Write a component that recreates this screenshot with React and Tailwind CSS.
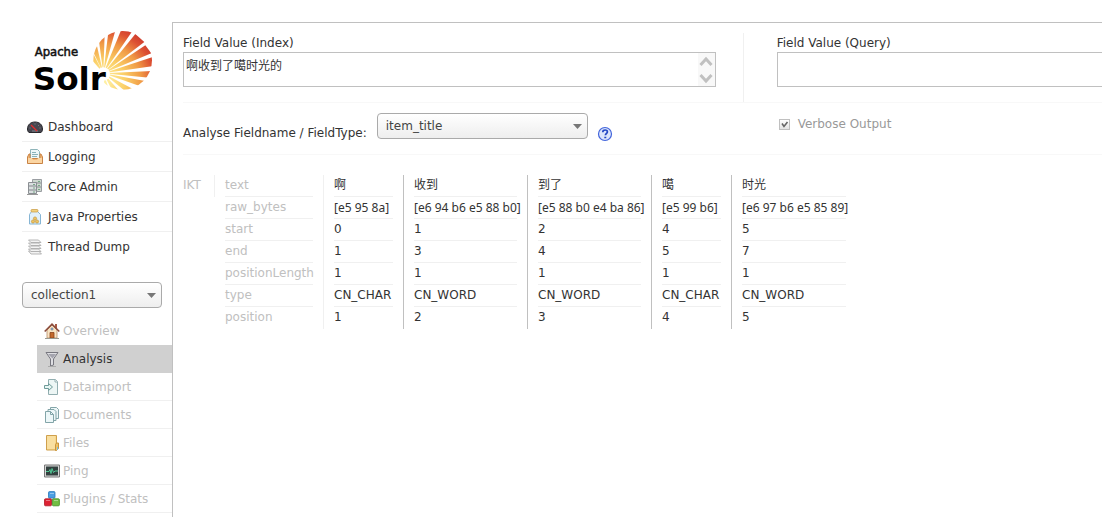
import React from "react";

const RAYS = [
  "219,100 219,124",
  "214,84 228,66",
  "236,56 254,42",
  "265,36 287,28",
  "305,26 338,32",
  "346,42 373,66",
  "376,76 394,100",
  "402,110 402,138",
  "402,153 396,174",
  "392,186 374,203",
  "352,214 326,222",
  "306,222 282,222",
  "272,222 254,206",
];

function Logo() {
  return (
    <svg viewBox="0 0 390 210" className="h-[70px] w-[130px]" role="img" aria-label="Apache Solr">
      <defs>
        <radialGradient id="sun" gradientUnits="userSpaceOnUse" cx="250" cy="185" r="185">
          <stop offset="0" stopColor="#fff3a8" />
          <stop offset=".35" stopColor="#fbd068" />
          <stop offset=".62" stopColor="#f09a45" />
          <stop offset=".82" stopColor="#dd5233" />
          <stop offset="1" stopColor="#c8302b" />
        </radialGradient>
        <clipPath id="disc">
          <circle cx="308" cy="121" r="88" />
        </clipPath>
      </defs>
      <g transform="translate(-6 -24)">
        <g clipPath="url(#disc)" fill="url(#sun)">
          {RAYS.map((r) => (
            <polygon key={r} points={"250,160 " + r} />
          ))}
        </g>
        <circle cx="250" cy="162" r="20" fill="#fff" />
        <text x="44" y="109" fontSize="35" fontFamily="'DejaVu Sans', sans-serif" fill="#111" stroke="#111" strokeWidth="1.500">
          Apache
        </text>
        <text x="38" y="209" fontSize="98" fontWeight="700" fontFamily="'DejaVu Sans', sans-serif" stroke="#fff" strokeWidth="9" paintOrder="stroke" fill="#000">
          Solr
        </text>
      </g>
    </svg>
  );
}

function Icon({ children }) {
  return (
    <svg viewBox="0 0 16 16" className="size-4 shrink-0" aria-hidden="true">
      {children}
    </svg>
  );
}

const icons = {
  dashboard: (
    <Icon>
      <path d="M.5 10C.5 5.800 3.500 3 8 3s7.500 2.800 7.500 7c0 1.800-.6 2.800-1.500 3.500H2C1.100 12.800.5 11.800.5 10z" fill="#474750" stroke="#29292e" />
      <path d="M2.500 9h1M4 6l.7.7M8 4.500v1M12 6l-.7.7M13.500 9h-1M5 12h6" stroke="#85858e" />
      <path d="M4 6l6 6" stroke="#e22c2c" strokeWidth="1.300" />
    </Icon>
  ),
  logging: (
    <Icon>
      <path d="M3.500.5h7l2 2V10h-9z" fill="#eef7f8" stroke="#8fb5ba" />
      <path d="M5 3.500h4M5 5.500h6M5 7.500h5" stroke="#8ab3ba" />
      <path d="M.5 8l1.500-3h1v4.500h10V5h1l1.500 3v6.500H.5z" fill="#f2b877" stroke="#c98345" />
      <path d="M1 9h4l1 2h4l1-2h4v5H1z" fill="#fbd5a2" />
    </Icon>
  ),
  core: (
    <Icon>
      <path d="M5.500.5h9v12h-9z" fill="#cdd8cf" stroke="#9a9ea2" />
      <path d="M6 4h8M6 8h8" stroke="#8b9094" />
      <path d="M1.500 3.500h8v11h-8z" fill="#dadfe0" stroke="#8b8f93" />
      <path d="M2 7h7M2 11h7" stroke="#83878b" />
      <path d="M6 5.500h2M6 9h2M6 13h2M11 2.500h2M11 6.500h2M11 10.500h2" stroke="#77a886" />
      <path d="M0 15.500h11" stroke="#999" />
    </Icon>
  ),
  java: (
    <Icon>
      <path d="M4.500 2.500h6l3 3v9.500h-11V5.500z" fill="#e2f1fa" stroke="#86b5d4" />
      <rect x="4" y=".5" width="7" height="2.500" rx="1" fill="#f3d17c" stroke="#c79a40" strokeWidth=".7" />
      <g fill="#efc45e" stroke="#c18e2d" strokeWidth=".6">
        <circle cx="8" cy="9.500" r="1.600" />
        <circle cx="6" cy="12.500" r="1.600" />
        <circle cx="10" cy="12.500" r="1.600" />
      </g>
    </Icon>
  ),
  thread: (
    <Icon>
      <g fill="#f3f3f3" stroke="#a5a5a5" strokeWidth=".8">
        <path d="M1.500 12h10l3 3H4z" />
        <path d="M4 12.500L1.500 10h10L14 12.500z" />
        <path d="M4 9.500L1.500 7h10L14 9.500z" />
        <path d="M4 6.500L1.500 4h10L14 6.500z" />
        <path d="M4 3.500L1.500 1h10L14 3.500z" />
      </g>
    </Icon>
  ),
  overview: (
    <Icon>
      <path d="M11 1h2v5h-2z" fill="#a85a45" />
      <path d="M3 7l5-5 5 5v8H3z" fill="#f8e4c4" stroke="#b88d69" strokeWidth=".8" />
      <path d="M.7 8.500L8 1.200l7.300 7.300" fill="none" stroke="#8b4c3c" strokeWidth="1.600" />
      <path d="M6 9.500h4V15H6z" fill="#c4692c" stroke="#8b421b" strokeWidth=".8" />
      <path d="M7 5h2v2H7z" fill="#8eb6df" stroke="#71777e" strokeWidth=".5" />
      <path d="M1 15.500h14" stroke="#999a90" />
    </Icon>
  ),
  analysis: (
    <Icon>
      <path d="M2 1.500h12L9.500 8v6L6.500 15V8z" fill="#dedee2" stroke="#77777f" strokeLinejoin="round" />
      <path d="M4 3h8L8.500 7.500z" fill="#a4a4ae" />
      <path d="M4 15.500h8" stroke="#aaa" />
    </Icon>
  ),
  dataimport: (
    <Icon>
      <path d="M4.500.5h7l2 2v13h-9z" fill="#edf6f5" stroke="#92aeb0" />
      <path d="M11 .5v2.500h2.500" fill="#fff" stroke="#92aeb0" />
      <path d="M.5 6.500h4v-2L8.500 8l-4 3.500v-2h-4z" fill="#e7f5f3" stroke="#6f9b99" />
    </Icon>
  ),
  documents: (
    <Icon>
      <g fill="#edf7f8" stroke="#83a5a9">
        <path d="M6.500.5h6l2 2v9h-8z" />
        <path d="M4 2.500h6l2 2v9H4z" />
        <path d="M1.500 4.500h5l3 3v8h-8z" />
        <path d="M6.500 4.500v3h3" fill="none" />
      </g>
    </Icon>
  ),
  files: (
    <Icon>
      <path d="M2.500.5h10v14.500h-10z" fill="#f7d88b" stroke="#cfa04d" />
      <path d="M3 1h8v13H3z" fill="#f9dfa0" />
      <path d="M11.500 9.500l1-1.500h2v5.500l-2 2h-1z" fill="#edc266" stroke="#c9943d" />
      <path d="M13.500 12v3" stroke="#7cb9d9" />
    </Icon>
  ),
  ping: (
    <Icon>
      <path d="M.5 2h15v12H.5z" fill="#d6d6d6" stroke="#777" />
      <path d="M2 3.500h12v9H2z" fill="#33403f" />
      <path d="M2 8.500h3l1-2 1 4 1-5 1.500 4L11 8h3" fill="none" stroke="#54d49c" strokeWidth=".9" />
    </Icon>
  ),
  plugins: (
    <Icon>
      <rect x="4.500" y=".6" width="6.500" height="6.500" rx="1" fill="#4c9fe3" stroke="#2877bb" strokeWidth=".8" />
      <rect x=".5" y="7.800" width="7" height="7" rx="1" fill="#dd2233" stroke="#ae1824" strokeWidth=".8" />
      <rect x="8.400" y="7.800" width="7" height="7" rx="1" fill="#72bd43" stroke="#438b21" strokeWidth=".8" />
      <path d="M6 2.500h4M2 9.500h4M10 9.500h4" stroke="#fff" strokeOpacity=".4" />
    </Icon>
  ),
};

const mainMenu = [
  ["Dashboard", icons.dashboard],
  ["Logging", icons.logging],
  ["Core Admin", icons.core],
  ["Java Properties", icons.java],
  ["Thread Dump", icons.thread],
];

const coreMenu = [
  ["Overview", icons.overview],
  ["Analysis", icons.analysis],
  ["Dataimport", icons.dataimport],
  ["Documents", icons.documents],
  ["Files", icons.files],
  ["Ping", icons.ping],
  ["Plugins / Stats", icons.plugins],
];

const rows = [
  ["text", "啊", "收到", "到了", "噶", "时光"],
  ["raw_bytes", "[e5 95 8a]", "[e6 94 b6 e5 88 b0]", "[e5 88 b0 e4 ba 86]", "[e5 99 b6]", "[e6 97 b6 e5 85 89]"],
  ["start", "0", "1", "2", "4", "5"],
  ["end", "1", "3", "4", "5", "7"],
  ["positionLength", "1", "1", "1", "1", "1"],
  ["type", "CN_CHAR", "CN_WORD", "CN_WORD", "CN_CHAR", "CN_WORD"],
  ["position", "1", "2", "3", "4", "5"],
];

function Select({ id, label, value, className }) {
  return (
    <div className={"relative " + className}>
      <select
        id={id}
        aria-label={label}
        defaultValue={value}
        className="block h-[26px] w-full appearance-none rounded-[4px] border border-[#aaa] bg-linear-to-b from-white to-[#eee] pl-2 pr-6 text-[#444]"
      >
        <option>{value}</option>
      </select>
      <svg viewBox="0 0 9 5" className="pointer-events-none absolute top-[11px] right-[6px] h-[5px] w-[9px]" aria-hidden="true">
        <path d="M0 0h9L4.500 5z" fill="#777" />
      </svg>
    </div>
  );
}

function Sidebar() {
  return (
    <aside className="w-[172px] shrink-0 pt-[28px] pl-[22px]">
      <a href="#/" className="block">
        <Logo />
      </a>
      <nav className="mt-[14px]">
        <ul>
          {mainMenu.map(([name, icon]) => (
            <li key={name} className="border-b border-[#f0f0f0] last:border-b-0">
              <a href={"#/" + name} className="flex h-[29px] items-center gap-[5px] pl-[5px] text-[#333]">
                {icon}
                {name}
              </a>
            </li>
          ))}
        </ul>
      </nav>
      <Select label="Core" value="collection1" className="mt-[21px] mr-[10px]" />
      <nav className="mt-[9px] ml-[15px]">
        <ul>
          {coreMenu.map(([name, icon]) => (
            <li key={name} className={name === "Analysis" ? "bg-[#d0d0d0] text-[#333]" : "text-[#c0c0c0]"}>
              <a
                href={"#/collection1/" + name}
                className={
                  "flex h-[28px] items-center gap-[3px] border-b pl-[7px] " +
                  (name === "Analysis" || name === "Overview" ? "border-transparent" : "border-[#f0f0f0]")
                }
              >
                {icon}
                {name}
              </a>
            </li>
          ))}
        </ul>
      </nav>
    </aside>
  );
}

export default function App() {
  return (
    <div className="flex min-h-screen overflow-hidden bg-white font-['DejaVu_Sans','Noto_Sans_CJK_SC',sans-serif] text-[12px] leading-[16px] text-[#333]">
      <Sidebar />
      <main className="mt-[22px] min-w-0 flex-1 border-t border-l border-[#c0c0c0] pt-[10px] pl-[10px]">
        <form>
          <div className="grid grid-cols-[609fr_391fr] border-b border-[#f8f8f8]">
            <div className="pt-[2px] pr-[27px] pb-[15px]">
              <label htmlFor="index" className="block">
                Field Value (Index)
              </label>
              <div className="relative mt-px">
                <textarea
                  id="index"
                  defaultValue="啊收到了噶时光的"
                  className="block h-[35px] w-full resize-none overflow-hidden border border-[#c0c0c0] py-[5px] pr-5 pl-[2px]"
                />
                <svg viewBox="0 0 17 33" className="absolute top-px right-px h-[33px] w-[17px]" aria-hidden="true">
                  <path d="M0 0h17v33H0z" fill="#f8f8f8" />
                  <path d="M2.500 12l5.500-6 5.500 6M2.500 22l5.500 6 5.500-6" fill="none" stroke="#c0c0c0" strokeWidth="3" />
                </svg>
              </div>
            </div>
            <div className="border-l border-[#f0f0f0] pt-[2px] pb-[15px] pl-[33px]">
              <label htmlFor="query" className="block">
                Field Value (Query)
              </label>
              <textarea id="query" className="mt-px block h-[35px] w-full resize-none border border-r-0 border-[#c0c0c0] p-[2px]" />
            </div>
          </div>
          <div className="grid grid-cols-[609fr_391fr] border-b border-[#f8f8f8] pt-[10px] pb-[12px]">
            <div className="flex items-start">
              <label htmlFor="field" className="mr-[10px] pt-[12px] whitespace-nowrap">
                Analyse Fieldname / FieldType:
              </label>
              <Select id="field" value="item_title" className="w-[211px]" />
              <a href="#/help" aria-label="Help" className="mt-[13px] ml-[9px]">
                <svg viewBox="0 0 16 16" className="size-4">
                  <circle cx="8" cy="8" r="6.500" fill="#dce6fb" stroke="#4365dc" strokeWidth="1.200" />
                  <path d="M5.800 6.200c0-1.600 1-2.200 2.300-2.200s2.300.8 2.300 2c0 1.500-2 1.500-2 3.200M7.300 11.500h2" fill="none" stroke="#2448c4" strokeWidth="1.700" />
                </svg>
              </a>
            </div>
            <label className="flex items-center gap-2 self-start pt-[3px] pl-[36px] text-[#999]">
              <span className="relative flex">
                <input type="checkbox" defaultChecked className="size-[11px] appearance-none border border-[#c0c0c0] bg-linear-to-b from-white to-[#e4e4e4]" />
                <svg viewBox="0 0 11 11" className="pointer-events-none absolute inset-0 size-[11px]" aria-hidden="true">
                  <path d="M3 4.500l2 3 3.500-4.500" fill="none" stroke="#666" strokeWidth="1.600" />
                </svg>
              </span>
              Verbose Output
            </label>
          </div>
        </form>
        <table className="mt-[20px] w-[673px] table-fixed border-separate border-spacing-0 text-left">
          <colgroup>
            <col className="w-[31px]" />
            <col className="w-[109px]" />
            <col className="w-[80px]" />
            <col className="w-[124px]" />
            <col className="w-[124px]" />
            <col className="w-[80px]" />
            <col className="w-[125px]" />
          </colgroup>
          <tbody>
            {rows.map(([name, ...values], r) => (
              <tr key={name}>
                <th className="p-0 align-top leading-[21px] font-normal text-[#c0c0c0]">{r === 0 ? "IKT" : ""}</th>
                <th
                  scope="row"
                  className={"px-[10px] py-0 font-normal text-[#c0c0c0] " + (r === 0 ? "border-l border-[#f0f0f0]" : "border-l border-transparent")}
                >
                  <div className={"h-[22px] border-b leading-[21px] " + (r === rows.length - 1 ? "border-transparent" : "border-[#f0f0f0]")}>{name}</div>
                </th>
                {values.map((value, c) => (
                  <td key={c} className={"border-l px-[10px] py-0 whitespace-nowrap " + (c === 0 ? "border-[#f0f0f0]" : "border-[#c0c0c0]")}>
                    <div
                      className={
                        "h-[22px] border-b leading-[21px] " +
                        (r === rows.length - 1 ? "border-transparent " : "border-[#f0f0f0] ") +
                        (r === 1 ? "font-['Noto_Sans',sans-serif]" : "")
                      }
                    >
                      {value}
                    </div>
                  </td>
                ))}
              </tr>
            ))}
          </tbody>
        </table>
      </main>
    </div>
  );
}
